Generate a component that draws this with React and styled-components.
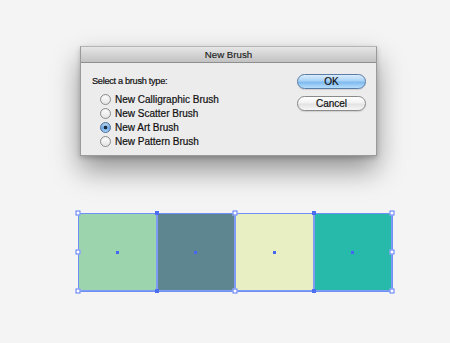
import React from "react";
import styled, { createGlobalStyle } from "styled-components";

const Global = createGlobalStyle`
  html, body { margin: 0; padding: 0; background: #f4f4f4; }
  body { font-family: "Liberation Sans", Arial, sans-serif; }
`;

const Page = styled.div`
  width: 450px;
  height: 343px;
  box-sizing: border-box;
  padding-top: 46px;
  overflow: hidden;
`;

const Dialog = styled.div`
  margin-left: 80px;
  width: 297px;
  height: 110px;
  box-sizing: border-box;
  border: 1px solid #9a9a9a;
  border-top-color: #b5b5b5;
  background: #ececec;
  box-shadow: 0 14px 26px rgba(0, 0, 0, 0.4), 0 2px 5px rgba(0, 0, 0, 0.2);
  display: flex;
  flex-direction: column;
`;

const TitleBar = styled.div`
  height: 15px;
  border-bottom: 1px solid #8f8f8f;
  background: linear-gradient(#e6e6e6, #c2c2c2);
  display: flex;
  align-items: center;
  justify-content: center;
  font-size: 9.7px;
  color: #1c1c1c;
  -webkit-text-stroke: 0.15px #1c1c1c;
`;

const Body = styled.div`
  flex: 1;
  display: flex;
  justify-content: space-between;
  padding: 11px 10px 0 11px;
`;

const LeftCol = styled.div`
  display: flex;
  flex-direction: column;
`;

const Prompt = styled.div`
  font-size: 9.2px;
  letter-spacing: -0.3px;
  line-height: 12px;
  color: #111;
  -webkit-text-stroke: 0.2px #111;
  margin-top: 1px;
  margin-bottom: 5px;
`;

const RadioList = styled.div`
  display: flex;
  flex-direction: column;
  padding-left: 8px;
`;

const RadioRow = styled.label`
  display: flex;
  align-items: center;
  gap: 4px;
  height: 14px;
  font-size: 10px;
  color: #111;
  -webkit-text-stroke: 0.2px #111;
`;

const RadioDot = styled.span`
  width: 11px;
  height: 11px;
  box-sizing: border-box;
  border-radius: 50%;
  border: 1px solid ${(p) => (p.$on ? "#4a6d99" : "#8c8c8c")};
  background: ${(p) =>
    p.$on
      ? "radial-gradient(circle at 50% 50%, #1d2a3a 0 1.6px, transparent 2.1px), linear-gradient(#c4def7, #6ea8e3 55%, #a7d2f7)"
      : "linear-gradient(#ffffff, #e4e4e4)"};
  box-shadow: inset 0 1px 1px rgba(0, 0, 0, 0.08);
`;

const ButtonCol = styled.div`
  display: flex;
  flex-direction: column;
  gap: 7px;
`;

const Button = styled.button`
  width: 69px;
  height: 15px;
  box-sizing: border-box;
  padding: 0;
  border-radius: 8px;
  font-family: "Liberation Sans", Arial, sans-serif;
  font-size: 10px;
  color: #111;
  -webkit-text-stroke: 0.2px #111;
  display: flex;
  align-items: center;
  justify-content: center;
  border: 1px solid ${(p) => (p.$primary ? "#5a7ca6" : "#8a8a8a")};
  background: ${(p) =>
    p.$primary
      ? "linear-gradient(#d9ecfc, #a9d2f6 45%, #7fbaee 55%, #b6defb)"
      : "linear-gradient(#ffffff, #f2f2f2 45%, #e2e2e2 55%, #f7f7f7)"};
  box-shadow: 0 1px 1px rgba(0, 0, 0, 0.12);
`;

const Canvas = styled.div`
  margin-top: 57px;
  margin-left: 78px;
  width: 314px;
  height: 78px;
  position: relative;
  display: grid;
  grid-template-columns: repeat(4, 1fr);
`;

const Swatch = styled.div`
  background: ${(p) => p.$color};
  box-shadow: inset 0 0 0 1px #7e9cf4;
  position: relative;
`;

const CenterPoint = styled.span`
  position: absolute;
  left: 50%;
  top: 50%;
  width: 3px;
  height: 3px;
  margin: -1.5px 0 0 -1.5px;
  background: #4466f2;
`;

const Outline = styled.div`
  position: absolute;
  inset: -0.5px;
  border: 1px solid #6f8ff5;
  pointer-events: none;
`;

const Handle = styled.span`
  position: absolute;
  width: ${(p) => (p.$solid ? "4px" : "5px")};
  height: ${(p) => (p.$solid ? "4px" : "5px")};
  box-sizing: border-box;
  transform: translate(-50%, -50%);
  background: ${(p) => (p.$solid ? "#4d6ef0" : "#ffffff")};
  border: ${(p) => (p.$solid ? "none" : "1px solid #5577f2")};
`;

const swatches = ["#9cd4ae", "#5d8691", "#e8f0c3", "#27b9aa"];

const handles = [
  { x: 0, y: 0 },
  { x: 50, y: 0 },
  { x: 100, y: 0 },
  { x: 0, y: 50 },
  { x: 100, y: 50 },
  { x: 0, y: 100 },
  { x: 50, y: 100 },
  { x: 100, y: 100 },
  { x: 25, y: 0, solid: true },
  { x: 75, y: 0, solid: true },
  { x: 25, y: 100, solid: true },
  { x: 75, y: 100, solid: true },
];

const options = [
  "New Calligraphic Brush",
  "New Scatter Brush",
  "New Art Brush",
  "New Pattern Brush",
];

export default function App() {
  return (
    <Page>
      <Global />
      <Dialog>
        <TitleBar>New Brush</TitleBar>
        <Body>
          <LeftCol>
            <Prompt>Select a brush type:</Prompt>
            <RadioList>
              {options.map((o, i) => (
                <RadioRow key={o}>
                  <RadioDot $on={i === 2} />
                  {o}
                </RadioRow>
              ))}
            </RadioList>
          </LeftCol>
          <ButtonCol>
            <Button $primary>OK</Button>
            <Button>Cancel</Button>
          </ButtonCol>
        </Body>
      </Dialog>
      <Canvas>
        {swatches.map((c) => (
          <Swatch key={c} $color={c}>
            <CenterPoint />
          </Swatch>
        ))}
        <Outline />
        {handles.map((h, i) => (
          <Handle
            key={i}
            $solid={h.solid}
            style={{ left: `${h.x}%`, top: `${h.y}%` }}
          />
        ))}
      </Canvas>
    </Page>
  );
}
